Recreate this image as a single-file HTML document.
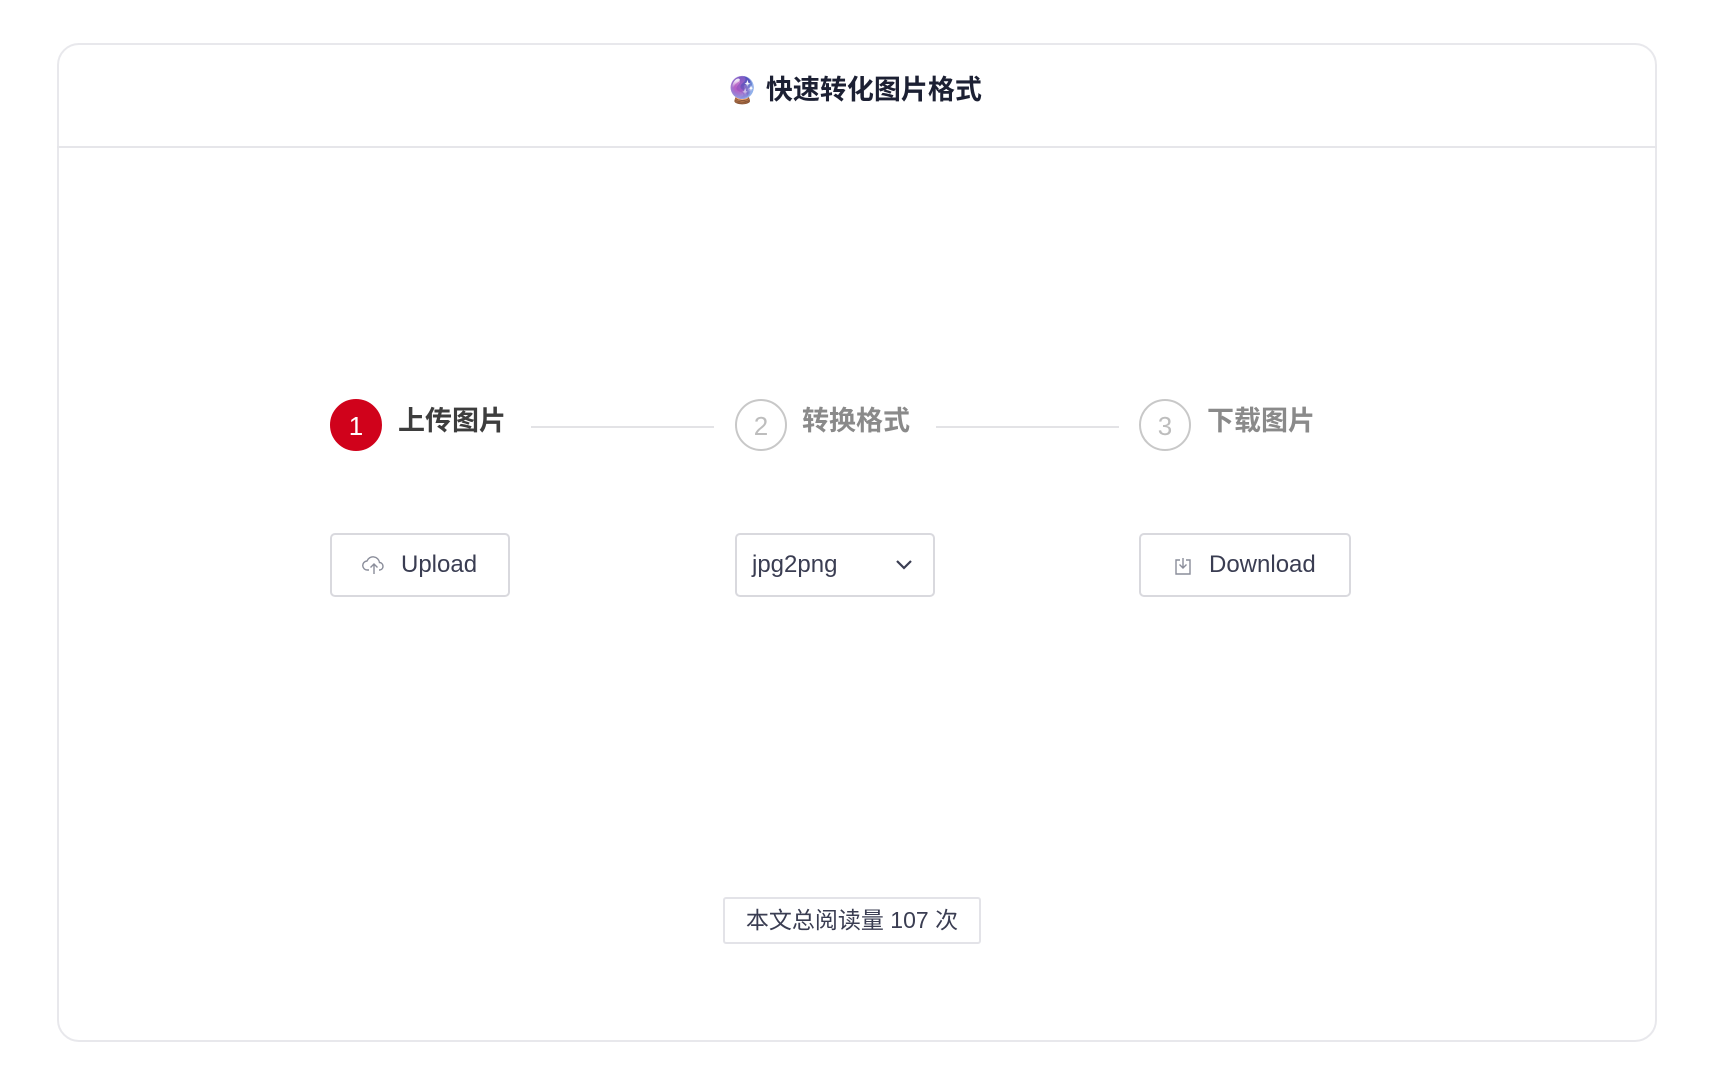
<!DOCTYPE html>
<html><head><meta charset="utf-8"><style>
*{margin:0;padding:0;box-sizing:border-box}
body{width:1714px;height:1074px;background:#fff;position:relative;font-family:"Liberation Sans","Noto Sans CJK SC",sans-serif;overflow:hidden}
.card{position:absolute;left:57px;top:43px;width:1600px;height:999px;border:2px solid #e8e8ec;border-radius:22px}
.hdr{position:absolute;left:57px;top:146px;width:1600px;height:2px;background:#e6e6ea}
.title{position:absolute;left:726px;top:71px;height:38px;line-height:38px;font-size:27px;font-weight:bold;color:#1c2033;white-space:nowrap}
.abs{position:absolute}
.circ{position:absolute;top:399px;width:52px;height:52px;border-radius:50%;text-align:center;line-height:50px;font-size:26px}
.st{position:absolute;top:401px;font-size:27px;font-weight:bold;line-height:40px;white-space:nowrap}
.ln{position:absolute;top:426px;height:2px;background:#e3e3e6}
.btn{position:absolute;top:533px;height:64px;border:2px solid #d9d9de;border-radius:5px;color:#3a3d52;font-size:24px;line-height:60px;white-space:nowrap}
</style></head><body>
<div class="card"></div>
<div class="hdr"></div>
<div class="title"><span style="font-size:26px;font-weight:normal">🔮</span> 快速转化图片格式</div>

<div class="circ" style="left:330px;background:#d0021b;color:#fff;border:2px solid #d0021b">1</div>
<div class="st" style="left:398px;color:#3d3d3d">上传图片</div>
<div class="ln" style="left:531px;width:183px"></div>
<div class="circ" style="left:735px;border:2px solid #c8c8c8;color:#bdbdbd">2</div>
<div class="st" style="left:802px;color:#8a8a8a">转换格式</div>
<div class="ln" style="left:936px;width:183px"></div>
<div class="circ" style="left:1139px;border:2px solid #c8c8c8;color:#bdbdbd">3</div>
<div class="st" style="left:1207px;color:#8a8a8a">下载图片</div>

<div class="btn" style="left:330px;width:180px">
<svg class="abs" style="left:30px;top:20px" width="24" height="20" viewBox="0 0 24 20" fill="none" stroke="#8a8d9a" stroke-width="1.4"><path d="M7 15H5.5a4.5 4.5 0 0 1-.5-9 6.5 6.5 0 0 1 12.5 1.5A3.8 3.8 0 0 1 18 15h-1"/><path d="M12 19V9M8.5 12.5L12 9l3.5 3.5"/></svg>
<span class="abs" style="left:69px">Upload</span></div>

<div class="btn" style="left:735px;width:200px">
<span class="abs" style="left:15px">jpg2png</span>
<svg class="abs" style="left:157px;top:23px" width="20" height="14" viewBox="0 0 20 14" fill="none" stroke="#3a3d52" stroke-width="2.2"><path d="M3 3l7 7 7-7"/></svg></div>

<div class="btn" style="left:1139px;width:212px">
<svg class="abs" style="left:33px;top:21px" width="18" height="20" viewBox="0 0 18 20" fill="none" stroke="#8a8d9a" stroke-width="1.4"><path d="M6 4H2v14h14V4h-4"/><path d="M9 2v10M5.5 8.5L9 12l3.5-3.5"/></svg>
<span class="abs" style="left:68px">Download</span></div>

<div class="abs" style="left:723px;top:897px;width:258px;height:47px;border:2px solid #e3e3e8;border-radius:3px;color:#3a3d52;font-size:23px;line-height:43px;text-align:center;white-space:nowrap">本文总阅读量 107 次</div>
</body></html>
